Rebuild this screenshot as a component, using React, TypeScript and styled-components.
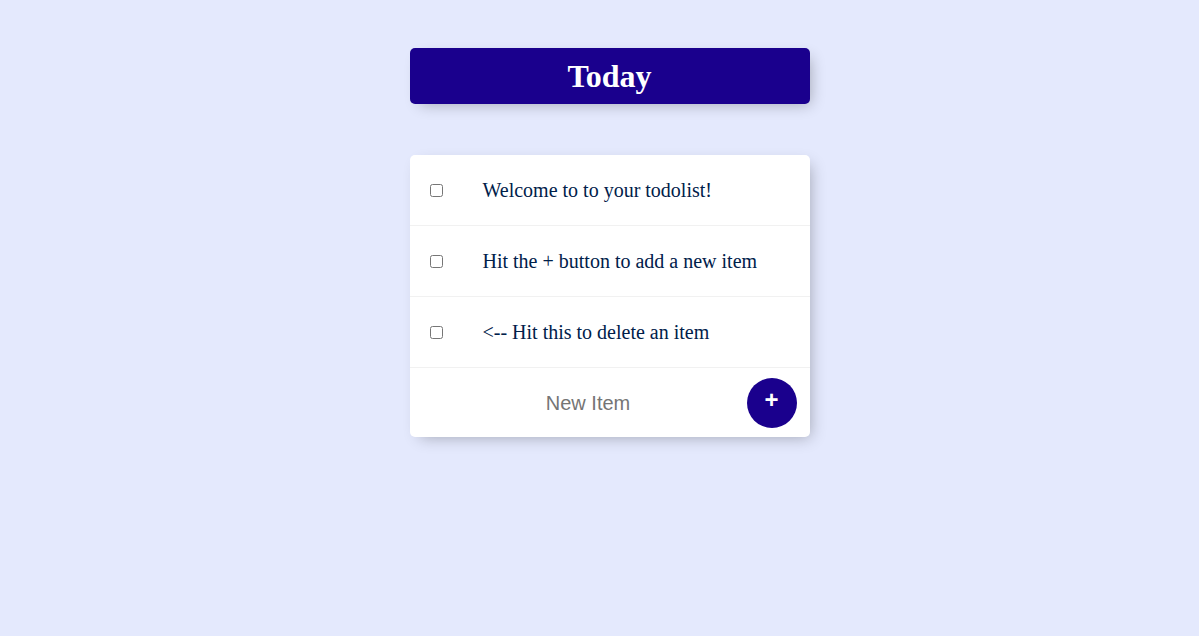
import { useState } from "react";
import styled, { createGlobalStyle } from "styled-components";

const accent = "#1a008d";

const GlobalStyle = createGlobalStyle`
   html, body {
      margin: 0;
      padding: 0;
   }
   body {
      background-color: #e4e9fd;
      font-family: "Liberation Serif", "Times New Roman", serif;
      min-height: 100vh;
      padding-left: 20px;
   }
`;

// Caixa base: cabeçalho e lista usam a mesma largura e sombra
const Box = styled.div<{ $heading?: boolean }>`
   width: 400px;
   margin: ${({ $heading }) => ($heading ? "48px auto 0" : "51px auto 0")};
   background: ${({ $heading }) => ($heading ? accent : "#ffffff")};
   border-radius: 5px;
   box-shadow: 5px 5px 15px -5px rgba(0, 0, 0, 0.3);
   text-align: ${({ $heading }) => ($heading ? "center" : "left")};
`;

const Heading = styled.h1`
   margin: 0;
   padding: 10px;
   height: 56px;
   box-sizing: border-box;
   color: #ffffff;
   font-size: 32px;
   font-weight: bold;
   line-height: 37px;
`;

const Item = styled.div`
   display: flex;
   align-items: center;
   min-height: 70px;
   border-bottom: 1px solid #f1f1f1;
`;

const Check = styled.input`
   margin: 20px;
   width: 13px;
   height: 13px;
`;

const Text = styled.p`
   margin: 0;
   padding: 20px;
   font-size: 20px;
   font-weight: 200;
   color: #00204a;
`;

const Form = styled.form`
   display: flex;
   align-items: center;
   min-height: 69px;
   margin-left: 22px;
`;

const NewItem = styled.input`
   width: 313px;
   height: 60px;
   border: none;
   outline: none;
   text-align: center;
   font-family: "Liberation Sans", Arial, sans-serif;
   font-size: 20px;
   font-weight: 200;
   padding: 0;
   margin-top: 1px;

   &::placeholder {
      color: #757575;
   }
`;

const AddButton = styled.button`
   width: 50px;
   height: 50px;
   margin-left: 2px;
   border: none;
   border-radius: 50%;
   background: ${accent};
   color: #ffffff;
   font-family: "Liberation Sans", Arial, sans-serif;
   font-size: 24px;
   font-weight: bold;
   padding: 0 0 6px;
   line-height: 1;
   cursor: pointer;
`;

const initialItems = [
   "Welcome to to your todolist!",
   "Hit the + button to add a new item",
   "<-- Hit this to delete an item",
];

export default function App() {
   const [items] = useState(initialItems);

   return (
      <>
         <GlobalStyle />
         <Box $heading>
            <Heading>Today</Heading>
         </Box>

         <Box>
            {items.map((item) => (
               <Item key={item}>
                  <Check type="checkbox" />
                  <Text>{item}</Text>
               </Item>
            ))}
            <Form onSubmit={(e) => e.preventDefault()}>
               <NewItem type="text" placeholder="New Item" autoComplete="off" />
               <AddButton type="submit">+</AddButton>
            </Form>
         </Box>
      </>
   );
}
